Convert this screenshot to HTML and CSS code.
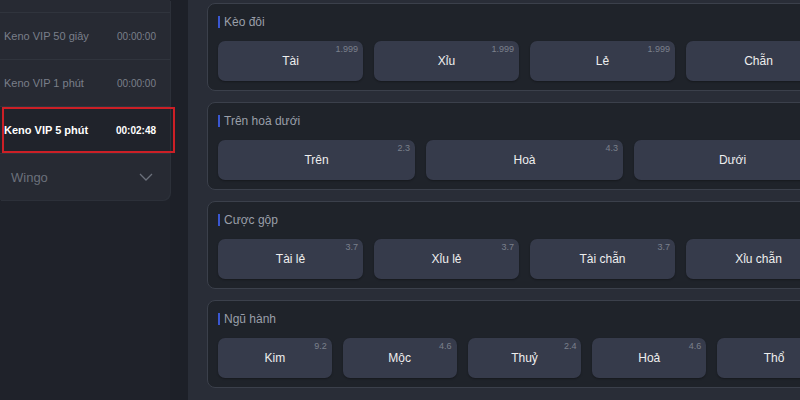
FILE: index.html
```html
<!DOCTYPE html>
<html lang="vi">
<head>
    <meta charset="UTF-8">
    <meta name="viewport" content="width=device-width, initial-scale=1.0">
    <link rel="stylesheet" href="styles.css">
    <title>Keno VIP</title>
</head>
<body>

<div class="sidebar">
    <div class="menu">
        <div class="menu-row menu-top"></div>
        <div class="menu-row">
            <span class="game-name">Keno VIP 50 giây</span>
            <span class="game-time">00:00:00</span>
        </div>
        <div class="menu-row">
            <span class="game-name">Keno VIP 1 phút</span>
            <span class="game-time">00:00:00</span>
        </div>
        <div class="menu-row active">
            <span class="game-name">Keno VIP 5 phút</span>
            <span class="game-time">00:02:48</span>
        </div>
        <div class="menu-row group">
            <span class="group-name">Wingo</span>
            <svg class="chevron" width="14" height="8" viewBox="0 0 14 8">
                <path d="M1 1 L7 7 L13 1" fill="none" stroke="#6b707b" stroke-width="1.3"/>
            </svg>
        </div>
    </div>
</div>

<div class="gutter"></div>

<div class="main">
    <div class="bet-group">
        <div class="bet-title">Kèo đôi</div>
        <div class="bet-row cols-4">
            <div class="bet-btn"><span class="odds">1.999</span>Tài</div>
            <div class="bet-btn"><span class="odds">1.999</span>Xỉu</div>
            <div class="bet-btn"><span class="odds">1.999</span>Lẻ</div>
            <div class="bet-btn"><span class="odds">1.999</span>Chẵn</div>
        </div>
    </div>

    <div class="bet-group">
        <div class="bet-title">Trên hoà dưới</div>
        <div class="bet-row cols-3">
            <div class="bet-btn"><span class="odds">2.3</span>Trên</div>
            <div class="bet-btn"><span class="odds">4.3</span>Hoà</div>
            <div class="bet-btn"><span class="odds">2.3</span>Dưới</div>
        </div>
    </div>

    <div class="bet-group">
        <div class="bet-title">Cược gộp</div>
        <div class="bet-row cols-4">
            <div class="bet-btn"><span class="odds">3.7</span>Tài lẻ</div>
            <div class="bet-btn"><span class="odds">3.7</span>Xỉu lẻ</div>
            <div class="bet-btn"><span class="odds">3.7</span>Tài chẵn</div>
            <div class="bet-btn"><span class="odds">3.7</span>Xỉu chẵn</div>
        </div>
    </div>

    <div class="bet-group">
        <div class="bet-title">Ngũ hành</div>
        <div class="bet-row cols-5">
            <div class="bet-btn"><span class="odds">9.2</span>Kim</div>
            <div class="bet-btn"><span class="odds">4.6</span>Mộc</div>
            <div class="bet-btn"><span class="odds">2.4</span>Thuỷ</div>
            <div class="bet-btn"><span class="odds">4.6</span>Hoả</div>
            <div class="bet-btn"><span class="odds">9.2</span>Thổ</div>
        </div>
    </div>
</div>

</body>
</html>
```

FILE: styles.css
```css
body {
    font-family: 'Liberation Sans', Arial, sans-serif;
    background-color: #1f222a;
    margin: 0;
    width: 800px;
    height: 400px;
    overflow: hidden;
    display: flex;
}

/* left menu */
.sidebar {
    width: 170px;
    flex-shrink: 0;
    position: relative;
}

.menu {
    background-color: #272a33;
    border-bottom-right-radius: 8px;
    box-shadow: 1px 1px 0 #2c3039;
}

.menu-row {
    height: 46px;
    display: flex;
    align-items: center;
    justify-content: space-between;
    padding: 0 14px 0 4px;
    border-bottom: 1px solid #30343d;
}

.menu-top {
    height: 12px;
}

.game-name {
    font-size: 11px;
    color: #7a7f8a;
}

.game-time {
    font-size: 10px;
    color: #7a7f8a;
}

.menu-row.active {
    background-color: #20232b;
}

.menu-row.active .game-name,
.menu-row.active .game-time {
    color: #ffffff;
    font-weight: bold;
}

/* red highlight frame drawn over the row */
.menu-row.active::after {
    content: "";
    position: absolute;
    left: 2px;
    top: 107px;
    width: 169px;
    height: 42px;
    border: 2px solid #cc1f26;
}

.menu-row.group {
    height: 46px;
    border-bottom: none;
    padding-left: 11px;
    padding-right: 17px;
}

.group-name {
    font-size: 13px;
    color: #6b707b;
}

.gutter {
    width: 18px;
    flex-shrink: 0;
    background-color: #1d2028;
}

/* bet panel */
.main {
    flex: 1;
    background-color: #292d37;
    padding: 3px 0 0 19px;
    overflow: hidden;
}

.bet-group {
    width: 633px;
    border: 1px solid #3b404b;
    border-radius: 8px;
    background-color: #1f232a;
    padding: 8px 10px 9px 10px;
    margin-bottom: 11px;
}

.bet-title {
    font-size: 12px;
    line-height: 20px;
    color: #9a9fa9;
    margin-bottom: 9px;
    padding-left: 6px;
    position: relative;
}

.bet-title::before {
    content: "";
    position: absolute;
    left: 0;
    top: 4px;
    width: 2px;
    height: 12px;
    background-color: #3a57d1;
}

.bet-row {
    display: grid;
    gap: 11px;
    width: 613px;
}

.cols-3 {
    grid-template-columns: repeat(3, 1fr);
}

.cols-4 {
    grid-template-columns: repeat(4, 1fr);
}

.cols-5 {
    grid-template-columns: repeat(5, 1fr);
}

.bet-btn {
    height: 40px;
    background-color: #363b4b;
    border-radius: 7px;
    box-shadow: 0 1px 2px rgba(0, 0, 0, 0.3);
    color: #eeeeee;
    font-size: 12px;
    display: flex;
    align-items: center;
    justify-content: center;
    position: relative;
}

.odds {
    position: absolute;
    top: 3px;
    right: 5px;
    font-size: 9px;
    color: #7b808c;
}
```
